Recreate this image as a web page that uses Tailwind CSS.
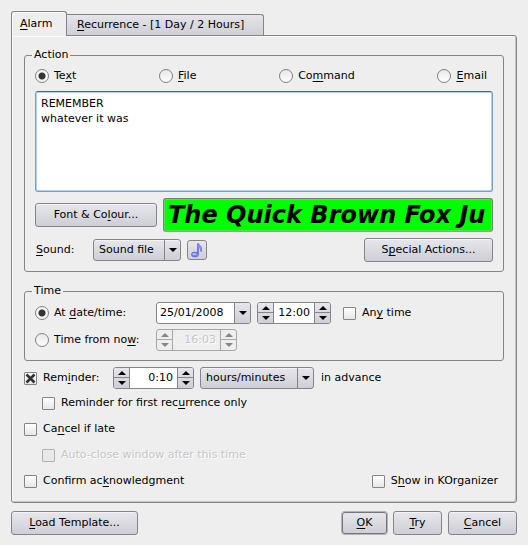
<!DOCTYPE html>
<html lang="en">
<head>
<meta charset="utf-8">
<title>Alarm</title>
<script src="https://cdn.jsdelivr.net/npm/@tailwindcss/browser@4"></script>
</head>
<body class="bg-[#eeeeee] text-black text-[11px] leading-[14px] font-['DejaVu_Sans','Bitstream_Vera_Sans',sans-serif]">
<svg class="hidden">
  <symbol id="up" viewBox="0 0 8 4"><path d="M4 0L8 4H0Z" fill="currentColor"/></symbol>
  <symbol id="down" viewBox="0 0 8 4"><path d="M0 0H8L4 4Z" fill="currentColor"/></symbol>
</svg>
<form class="px-[11px] pt-[11px] pb-[10px]">
  <div role="tablist" class="flex items-end">
    <button type="button" role="tab" aria-selected="true" class="relative z-10 -mb-px h-[25px] w-14 text-left pl-2 pb-px border border-b-0 border-[#858589] rounded-t-[3px] bg-[#eeeeee] shadow-[inset_1px_1px_0_#fafafa]"><span class="underline underline-offset-2">A</span>larm</button>
    <button type="button" role="tab" aria-selected="false" class="-ml-px h-[21px] w-[198px] text-left pl-[10px] border border-b-0 border-[#858589] rounded-tr-[3px] bg-linear-to-b from-[#e4e4ea] to-[#cfcfd6]"><span class="underline underline-offset-2">R</span>ecurrence - [1 Day / 2 Hours]</button>
  </div>

  <main class="border border-[#858585] rounded-b-[3px] rounded-tr-[3px] px-3 pt-3 pb-[11px] shadow-[inset_1px_1px_0_#fafafa,inset_-1px_-1px_0_#c4c4c4]">
    <fieldset class="min-w-0 border border-[#858585] rounded-[3px] px-[10px] pb-[9px]">
      <legend class="-ml-[3px] px-[2px]">Action</legend>
      <div class="flex justify-between h-[18px] items-center mt-[5px] mb-[6px] pr-[6px]">
        <label class="flex items-center gap-[5px]"><input type="radio" name="action" checked class="appearance-none size-[14px] rounded-full border border-[#808080] bg-linear-to-b from-[#e8e8e8] to-white checked:bg-[radial-gradient(circle,#333_0_3px,#f4f4f4_4px)]"><span>Te<u class="underline-offset-2">x</u>t</span></label>
        <label class="flex items-center gap-[5px]"><input type="radio" name="action" class="appearance-none size-[14px] rounded-full border border-[#808080] bg-linear-to-b from-[#e8e8e8] to-white checked:bg-[radial-gradient(circle,#333_0_3px,#f4f4f4_4px)]"><span><u class="underline-offset-2">F</u>ile</span></label>
        <label class="flex items-center gap-[5px]"><input type="radio" name="action" class="appearance-none size-[14px] rounded-full border border-[#808080] bg-linear-to-b from-[#e8e8e8] to-white checked:bg-[radial-gradient(circle,#333_0_3px,#f4f4f4_4px)]"><span>Co<u class="underline-offset-2">m</u>mand</span></label>
        <label class="flex items-center gap-[5px]"><input type="radio" name="action" class="appearance-none size-[14px] rounded-full border border-[#808080] bg-linear-to-b from-[#e8e8e8] to-white checked:bg-[radial-gradient(circle,#333_0_3px,#f4f4f4_4px)]"><span><u class="underline-offset-2">E</u>mail</span></label>
      </div>
      <textarea aria-label="Alarm text" class="block w-full h-[101px] resize-none outline-none bg-white border border-[#6f9fce] border-t-[#44688c] rounded-[3px] px-[5px] py-1 leading-[15px] shadow-[inset_0_0_0_1px_#b5d2ee]">REMEMBER
whatever it was</textarea>
      <div class="flex items-center gap-[6px] mt-[6px]">
        <button type="button" class="shrink-0 h-6 w-[122px] border border-[#858589] rounded-[3px] bg-linear-to-b from-[#e6e6ec] to-[#cecfd6] shadow-[inset_0_1px_0_#f4f4f8]">Font &amp; Co<u class="underline-offset-2">l</u>our...</button>
        <output class="min-w-0 grow h-[34px] overflow-hidden whitespace-nowrap border border-[#808080] border-b-[#9a9a9a] rounded-[3px] bg-[#00ff00] shadow-[inset_0_0_0_1px_#5bd85b] pl-1 pr-px"><span class="block overflow-hidden leading-8 text-[24px] font-bold italic">The Quick Brown Fox Ju</span></output>
      </div>
      <div class="flex items-center mt-[6px]">
        <label for="sound" class="w-[58px] pl-px"><u class="underline-offset-2">S</u>ound:</label>
        <div class="relative h-[22px] w-[88px]">
          <select id="sound" class="appearance-none size-full pl-[5px] border border-[#858589] rounded-[3px] bg-linear-to-b from-[#e6e6ec] to-[#cecfd6] shadow-[inset_0_1px_0_#f4f4f8]"><option>Sound file</option></select>
          <span class="absolute right-px inset-y-px w-4 border-l border-[#858589] grid place-items-center pointer-events-none"><svg class="w-2 h-1"><use href="#down"/></svg></span>
        </div>
        <button type="button" aria-label="Choose sound" class="ml-[6px] size-5 grid place-items-center border border-[#858589] rounded-[3px] bg-linear-to-b from-[#e6e6ec] to-[#cecfd6]">
          <svg class="size-4" viewBox="0 0 16 16"><path d="M9 12V1.500C9.800 4 13.500 5 12 9.500" fill="none" stroke="#5560dc" stroke-width="1.500"/><path d="M9 1.500L13 5.500V8L9 5.500Z" fill="#8290f0"/><ellipse cx="6" cy="12.500" rx="3.500" ry="2.400" fill="#7f8cf4" stroke="#5662d8" stroke-width=".8"/><ellipse cx="5.200" cy="12" rx="1.800" ry="1" fill="#b6c0ff"/></svg>
        </button>
        <button type="button" class="ml-auto h-6 w-[129px] border border-[#858589] rounded-[3px] bg-linear-to-b from-[#e6e6ec] to-[#cecfd6] shadow-[inset_0_1px_0_#f4f4f8]">S<u class="underline-offset-2">p</u>ecial Actions...</button>
      </div>
    </fieldset>

    <fieldset class="min-w-0 mt-3 border border-[#858585] rounded-[3px] px-[10px] pb-[9px]">
      <legend class="-ml-[3px] px-[2px]">Time</legend>
      <div class="grid grid-cols-[121px_1fr] gap-y-[5px] items-center mt-1">
        <label class="flex items-center gap-[5px]"><input type="radio" name="when" checked class="appearance-none size-[14px] rounded-full border border-[#808080] bg-linear-to-b from-[#e8e8e8] to-white checked:bg-[radial-gradient(circle,#333_0_3px,#f4f4f4_4px)]"><span>At <u class="underline-offset-2">d</u>ate/time:</span></label>
        <div class="flex items-center">
          <div class="flex w-[95px] h-[22px] border border-[#858589] rounded-[3px] overflow-hidden bg-white">
            <input type="text" aria-label="Date" value="25/01/2008" class="min-w-0 grow pl-[3px] outline-none">
            <button type="button" aria-label="Open calendar" class="w-4 shrink-0 border-l border-[#858589] grid place-items-center bg-linear-to-b from-[#e6e6ec] to-[#cecfd6]"><svg class="w-2 h-1"><use href="#down"/></svg></button>
          </div>
          <div class="ml-[6px] flex w-[74px] h-[22px] border border-[#858589] rounded-[3px] overflow-hidden bg-white">
            <div class="w-4 shrink-0 grid grid-rows-2 border-r border-[#858589] bg-linear-to-b from-[#e6e6ec] to-[#cecfd6]">
              <button type="button" aria-label="Hour up" class="grid place-items-center border-b border-[#858589]"><svg class="w-2 h-1"><use href="#up"/></svg></button>
              <button type="button" aria-label="Hour down" class="grid place-items-center"><svg class="w-2 h-1"><use href="#down"/></svg></button>
            </div>
            <input type="text" aria-label="Time" value="12:00" class="min-w-0 grow pr-1 text-right outline-none">
            <div class="w-4 shrink-0 grid grid-rows-2 border-l border-[#858589] bg-linear-to-b from-[#e6e6ec] to-[#cecfd6]">
              <button type="button" aria-label="Minute up" class="grid place-items-center border-b border-[#858589]"><svg class="w-2 h-1"><use href="#up"/></svg></button>
              <button type="button" aria-label="Minute down" class="grid place-items-center"><svg class="w-2 h-1"><use href="#down"/></svg></button>
            </div>
          </div>
          <label class="ml-3 flex items-center gap-[6px]"><input type="checkbox" class="appearance-none size-[13px] border border-[#858589] rounded-[1px] bg-linear-to-b from-white to-[#e6e6e6]"><span>An<u class="underline-offset-2">y</u> time</span></label>
        </div>
        <label class="flex items-center gap-[5px]"><input type="radio" name="when" class="appearance-none size-[14px] rounded-full border border-[#808080] bg-linear-to-b from-[#e8e8e8] to-white checked:bg-[radial-gradient(circle,#333_0_3px,#f4f4f4_4px)]"><span>Time from no<u class="underline-offset-2">w</u>:</span></label>
        <div class="flex w-[81px] h-[22px] border border-[#a8a8a8] rounded-[3px] overflow-hidden text-[#858585]">
          <div class="w-4 shrink-0 grid grid-rows-2 border-r border-[#a8a8a8]">
            <button type="button" disabled aria-label="Hours from now up" class="grid place-items-center border-b border-[#a8a8a8]"><svg class="w-2 h-1"><use href="#up"/></svg></button>
            <button type="button" disabled aria-label="Hours from now down" class="grid place-items-center"><svg class="w-2 h-1"><use href="#down"/></svg></button>
          </div>
          <input type="text" disabled aria-label="Time from now" value="16:03" class="min-w-0 grow pr-1 text-right text-[#c6c6c6] [text-shadow:1px_1px_0_#fff]">
          <div class="w-4 shrink-0 grid grid-rows-2 border-l border-[#a8a8a8]">
            <button type="button" disabled aria-label="Minutes from now up" class="grid place-items-center border-b border-[#a8a8a8]"><svg class="w-2 h-1"><use href="#up"/></svg></button>
            <button type="button" disabled aria-label="Minutes from now down" class="grid place-items-center"><svg class="w-2 h-1"><use href="#down"/></svg></button>
          </div>
        </div>
      </div>
    </fieldset>

    <div class="flex items-center mt-[6px]">
      <label class="w-[89px] flex items-center gap-[6px]">
        <span class="grid size-[13px]">
          <input type="checkbox" checked class="peer col-start-1 row-start-1 appearance-none size-[13px] border border-[#858589] rounded-[1px] bg-linear-to-b from-white to-[#e6e6e6]">
          <svg class="col-start-1 row-start-1 size-[13px] invisible peer-checked:visible pointer-events-none" viewBox="0 0 13 13"><path d="M2.500 2.500L10.500 10.500M10.500 2.500L2.500 10.500" stroke="#333" stroke-width="2.600"/></svg>
        </span>
        <span>Rem<u class="underline-offset-2">i</u>nder:</span>
      </label>
      <div class="flex w-[81px] h-[22px] border border-[#858589] rounded-[3px] overflow-hidden bg-white">
        <div class="w-4 shrink-0 grid grid-rows-2 border-r border-[#858589] bg-linear-to-b from-[#e6e6ec] to-[#cecfd6]">
          <button type="button" aria-label="Reminder hours up" class="grid place-items-center border-b border-[#858589]"><svg class="w-2 h-1"><use href="#up"/></svg></button>
          <button type="button" aria-label="Reminder hours down" class="grid place-items-center"><svg class="w-2 h-1"><use href="#down"/></svg></button>
        </div>
        <input type="text" aria-label="Reminder period" value="0:10" class="min-w-0 grow pr-1 text-right outline-none">
        <div class="w-4 shrink-0 grid grid-rows-2 border-l border-[#858589] bg-linear-to-b from-[#e6e6ec] to-[#cecfd6]">
          <button type="button" aria-label="Reminder minutes up" class="grid place-items-center border-b border-[#858589]"><svg class="w-2 h-1"><use href="#up"/></svg></button>
          <button type="button" aria-label="Reminder minutes down" class="grid place-items-center"><svg class="w-2 h-1"><use href="#down"/></svg></button>
        </div>
      </div>
      <div class="relative h-[22px] w-[114px] ml-[6px]">
        <select id="units" aria-label="Reminder units" class="appearance-none size-full pl-[5px] border border-[#858589] rounded-[3px] bg-linear-to-b from-[#e6e6ec] to-[#cecfd6] shadow-[inset_0_1px_0_#f4f4f8]"><option>hours/minutes</option></select>
        <span class="absolute right-px inset-y-px w-4 border-l border-[#858589] grid place-items-center pointer-events-none"><svg class="w-2 h-1"><use href="#down"/></svg></span>
      </div>
      <label for="units" class="ml-[7px]">in advance</label>
    </div>

    <div class="flex flex-col gap-[6px] mt-1">
      <label class="ml-[18px] h-5 flex items-center gap-[6px]"><input type="checkbox" class="appearance-none size-[13px] border border-[#858589] rounded-[1px] bg-linear-to-b from-white to-[#e6e6e6]"><span>Reminder for first rec<u class="underline-offset-2">u</u>rrence only</span></label>
      <label class="h-5 flex items-center gap-[6px]"><input type="checkbox" class="appearance-none size-[13px] border border-[#858589] rounded-[1px] bg-linear-to-b from-white to-[#e6e6e6]"><span>Ca<u class="underline-offset-2">n</u>cel if late</span></label>
      <label class="ml-[18px] h-5 flex items-center gap-[6px] text-[#c6c6c6] [text-shadow:1px_1px_0_#fff]"><input type="checkbox" disabled class="appearance-none size-[13px] border border-[#b0b0b0] rounded-[1px] bg-[#e8e8e8]"><span>Auto-close window after this time</span></label>
      <div class="flex justify-between h-5 pr-[6px]">
        <label class="flex items-center gap-[6px]"><input type="checkbox" class="appearance-none size-[13px] border border-[#858589] rounded-[1px] bg-linear-to-b from-white to-[#e6e6e6]"><span>Confirm ac<u class="underline-offset-2">k</u>nowledgment</span></label>
        <label class="flex items-center gap-[6px]"><input type="checkbox" class="appearance-none size-[13px] border border-[#858589] rounded-[1px] bg-linear-to-b from-white to-[#e6e6e6]"><span>S<u class="underline-offset-2">h</u>ow in KOrganizer</span></label>
      </div>
    </div>
  </main>

  <div class="flex items-center gap-[6px] mt-2">
    <button type="button" class="mr-auto h-6 w-[127px] border border-[#858589] rounded-[3px] bg-linear-to-b from-[#e6e6ec] to-[#cecfd6] shadow-[inset_0_1px_0_#f4f4f8]"><u class="underline-offset-2">L</u>oad Template...</button>
    <button type="submit" class="h-[22px] w-[45px] border border-[#75757a] rounded-[3px] bg-linear-to-b from-[#e6e6ec] to-[#cecfd6] shadow-[0_0_0_1px_#b4b4b6]"><u class="underline-offset-2">O</u>K</button>
    <button type="button" class="h-6 w-[49px] border border-[#858589] rounded-[3px] bg-linear-to-b from-[#e6e6ec] to-[#cecfd6] shadow-[inset_0_1px_0_#f4f4f8]"><u class="underline-offset-2">T</u>ry</button>
    <button type="button" class="h-6 w-[69px] border border-[#858589] rounded-[3px] bg-linear-to-b from-[#e6e6ec] to-[#cecfd6] shadow-[inset_0_1px_0_#f4f4f8]"><u class="underline-offset-2">C</u>ancel</button>
  </div>
</form>
</body>
</html>
